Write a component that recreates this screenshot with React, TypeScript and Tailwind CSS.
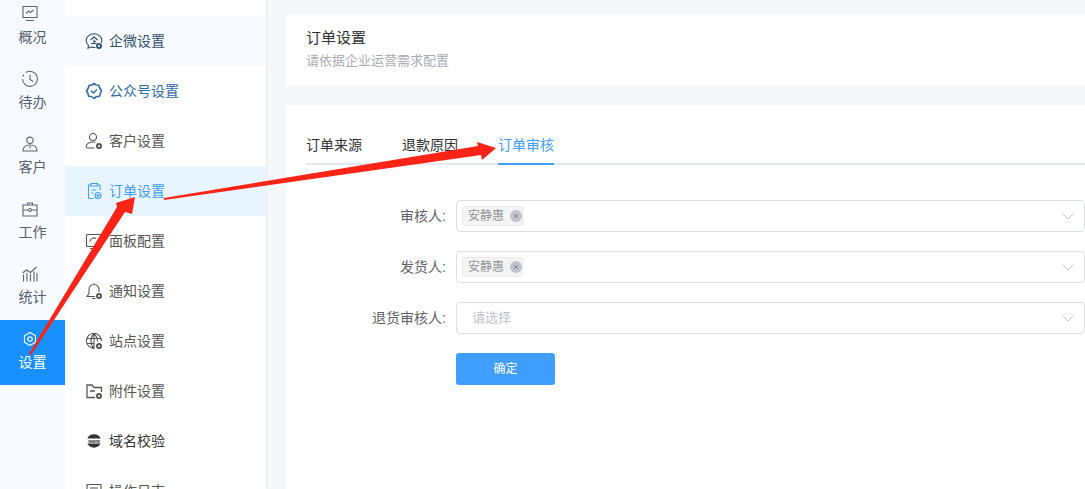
import React from "react";

const FONT = "font-['Liberation_Sans','Noto_Sans_CJK_SC',sans-serif]";

const railItems = [
  { label: "概况", icon: <path d="M2 1.500h14v11H2zM5 15.500h8M5 8.500l2.500-2.500 2 1.500 3-2.500" /> },
  { label: "待办", icon: <path d="M5 2.500A7.500 7.500 0 1 1 1.500 9M1.800 6.500A7.500 7.500 0 0 1 3 4.500M9 5v4.500l3 2" /> },
  { label: "客户", icon: <path d="M9 8.500a3.200 3.200 0 1 0 0-6.400A3.200 3.200 0 0 0 9 8.500zM2 16c0-3.800 2.800-6 7-6s7 2.200 7 6zM9 11v2.500" /> },
  { label: "工作", icon: <path d="M2 5h14v11H2zM6.500 5V3h5v2M2 10h5M11 10h5M7.500 10a1.500 1.500 0 1 0 3 0a1.500 1.500 0 1 0-3 0" /> },
  { label: "统计", icon: <path d="M2.500 16.500v-7M6 16.500V8M9.500 16.500V9M13 16.500V6.500M16 16.500V8M1.500 8l4-3 4 2.500 6-5.500" /> },
];

// small gear badge in the corner of most menu icons
const Badge = ({ color = "#555" }: { color?: string }) => (
  <>
    <circle cx="14" cy="14" r="3" fill={color} stroke="none" />
    <circle cx="14" cy="14" r="1.100" fill="#fff" stroke="none" />
  </>
);

const menuItems = [
  {
    label: "企微设置",
    color: "#35506e",
    bg: "bg-[#f7fbff]",
    icon: (
      <>
        <path d="M10.500 15.300c-.5.100-1 .200-1.500.200-1 0-2-.2-3-.5l-3 1.200.5-2.900C2 12 1.200 10.300 1.200 8.500 1.200 4.500 5 1.800 9 1.800s7.800 2.700 7.800 6.700c0 .8-.1 1.500-.4 2.200" />
        <path d="M5.500 8L9 4.800 12.500 8M9 7.500v4M6 11.500h5.500M9 9.500h2" />
        <Badge color="#35506e" />
      </>
    ),
  },
  {
    label: "公众号设置",
    color: "#2f6ca8",
    icon: (
      <>
        <path d="M9 1.500l2 1.500 2.800.2.700 2.300L16.500 9l-1.200 2.500-.8 2.700-2.800.300L9 16.500l-2.500-2-2.800-.300-.8-2.700L1.500 9l2-3.500.700-2.300L7 3z" strokeWidth="1.600" strokeLinejoin="round" />
        <path d="M6 8.800l2.300 2.200 3.700-3.500" strokeWidth="1.500" />
      </>
    ),
  },
  {
    label: "客户设置",
    color: "#555",
    icon: (
      <>
        <path d="M8 8.500a3.500 3.500 0 1 0 0-7 3.500 3.500 0 0 0 0 7zM9.500 16H2.500C1.500 16 1 15.300 1.200 14.300 1.800 11.500 4 10 8 10c1 0 1.700.100 2.500.300" />
        <Badge />
      </>
    ),
  },
  {
    label: "订单设置",
    color: "#3f9eff",
    bg: "bg-[#e8f4fe]",
    icon: (
      <>
        <path d="M6 3H3.500v12.500c0 .5.500 1 1 1h4M12.500 3H15v5M6 1.500h6.500V4H6zM6.500 8h5M6.500 11h2" />
        <circle cx="13" cy="13.500" r="3" />
        <circle cx="13" cy="13.500" r="1" />
      </>
    ),
  },
  {
    label: "面板配置",
    color: "#555",
    icon: (
      <>
        <path d="M9 14.500H2.500c-.6 0-1-.4-1-1V3.500c0-.6.400-1 1-1h13c.6 0 1 .4 1 1V9M5 16.500h4" />
        <path d="M5 9.500a4 4 0 0 1 6-3" />
        <Badge />
      </>
    ),
  },
  {
    label: "通知设置",
    color: "#555",
    icon: (
      <>
        <path d="M10 14.500H2l2-3V7.500a5 5 0 0 1 10 0v2.500M7 16.500h3.500M9 2.500V1.500" />
        <Badge />
      </>
    ),
  },
  {
    label: "站点设置",
    color: "#555",
    icon: (
      <>
        <path d="M9.500 16.300A7.500 7.500 0 1 1 16.400 9M1.500 6.500h15M1.500 11.500h8M9 1.500V16.500M9 1.500c-4 4-4 11 0 15M9 1.500c2.500 2.500 3.500 5.500 3.500 8" />
        <Badge />
      </>
    ),
  },
  {
    label: "附件设置",
    color: "#555",
    icon: (
      <>
        <path d="M10 15.500H2V3h5l2 2.500h7.500V10M5 9h5" strokeWidth="1.300" />
        <Badge />
      </>
    ),
  },
  {
    label: "域名校验",
    color: "#333",
    icon: (
      <>
        <path d="M2.300 6.500a7.500 7.500 0 0 1 13.400 0zM2.300 11.500a7.500 7.500 0 0 0 13.400 0z" fill="#333" stroke="none" />
        <text x="9" y="10.700" textAnchor="middle" fontSize="5" fontWeight="700" fill="#333" stroke="none" fontFamily="Liberation Sans">www</text>
      </>
    ),
  },
  {
    label: "操作日志",
    color: "#555",
    icon: <path d="M2 2.500h14v13H2zM5 6h8" />,
  },
];

const Chevron = () => (
  <svg width="12" height="7" viewBox="0 0 12 7" fill="none" stroke="#c0c4cc" strokeWidth="1" className="shrink-0">
    <path d="M.5.5L6 6l5.500-5.500" />
  </svg>
);

const Tag = () => (
  <span className="ml-[5px] flex h-[20px] w-[61px] items-center rounded-[3px] border border-[#e9e9eb] bg-[#f4f4f5] pl-[5px] text-[12px] text-[#909399]">
    安静惠
    <span className="ml-[6px] flex h-[12px] w-[12px] items-center justify-center rounded-full bg-[#c0c4cc]">
      <svg width="6" height="6" viewBox="0 0 6 6" stroke="#777" strokeWidth="0.800">
        <path d="M1 1l4 4M5 1L1 5" />
      </svg>
    </span>
  </span>
);

const FormRow = ({ label, children, mb }: { label: string; children: React.ReactNode; mb: string }) => (
  <div className={`flex h-[32px] items-center ${mb}`}>
    <label className="w-[160px] shrink-0 pr-[10px] text-right text-[14px] text-[#606266]">{label}</label>
    <div className="flex h-[32px] flex-1 items-center justify-between rounded-[4px] border border-[#dcdfe6] pr-[10px]">
      <div className="flex items-center">{children}</div>
      <Chevron />
    </div>
  </div>
);

export default function App() {
  return (
    <div className={`relative flex h-[489px] w-[1085px] overflow-hidden bg-[#f6f7f9] ${FONT}`}>
      {/* icon rail */}
      <div className="w-[65px] shrink-0 bg-[#f7faff]">
        <div className="mt-[-5px]">
          {railItems.map((item) => (
            <div key={item.label} className="flex h-[65px] flex-col items-center pt-[10px] text-[#555e6b]">
              <svg width="18" height="18" viewBox="0 0 18 18" fill="none" stroke="#5c6470" strokeWidth="1.100" className="mr-[5px]">
                {item.icon}
              </svg>
              <span className="mt-[4px] text-[14px] leading-[20px]">{item.label}</span>
            </div>
          ))}
          <div className="flex h-[65px] flex-col items-center bg-[#1890ff] pt-[10px] text-white">
            <svg width="18" height="18" viewBox="0 0 18 18" fill="none" stroke="#fff" strokeWidth="1.100" className="mr-[5px]">
              <path d="M9 2.500l5.500 3.200v6.600L9 15.500l-5.500-3.200V5.700z" strokeLinejoin="round" />
              <circle cx="9" cy="9" r="2.200" />
            </svg>
            <span className="mt-[4px] text-[14px] leading-[20px]">设置</span>
          </div>
        </div>
      </div>

      {/* settings menu */}
      <div className="w-[201px] shrink-0 overflow-hidden bg-white shadow-[1px_0_2px_rgba(0,0,0,0.05)]">
        <div className="mt-[-34px] flex h-[50px] items-center justify-center pl-[4px] text-[14px] text-[#555]">
          基础设置
        </div>
        {menuItems.map((item) => (
          <div
            key={item.label}
            className={`flex h-[50px] shrink-0 items-center pl-[20px] text-[14px] ${item.bg ?? ""}`}
            style={{ color: item.color }}
          >
            <svg width="18" height="18" viewBox="0 0 18 18" fill="none" stroke={item.color} strokeWidth="1.100" className="mr-[6px] shrink-0">
              {item.icon}
            </svg>
            {item.label}
          </div>
        ))}
      </div>

      {/* content */}
      <div className="min-w-0 flex-1 pt-[15px] pl-[20px]">
        <div className="h-[70px] bg-white pt-[13px] pl-[20px]">
          <div className="text-[15px] leading-[20px] text-[#303133]">订单设置</div>
          <div className="mt-[3px] text-[13px] leading-[20px] text-[#a8abb2]">请依据企业运营需求配置</div>
        </div>
        <div className="mt-[20px] h-[400px] bg-white pt-[25px] pl-[20px]">
          <div className="flex h-[35px] border-b-2 border-[#e4e7ed] text-[14px] leading-[30px] text-[#303133]">
            <div className="w-[56px]">订单来源</div>
            <div className="ml-[40px] w-[56px]">退款原因</div>
            <div className="ml-[40px] mb-[-2px] w-[56px] border-b-2 border-[#409eff] text-[#409eff]">订单审核</div>
          </div>
          <div className="mt-[35px] ml-[-10px]">
            <FormRow label="审核人:" mb="mb-[19px]">
              <Tag />
            </FormRow>
            <FormRow label="发货人:" mb="mb-[19px]">
              <Tag />
            </FormRow>
            <FormRow label="退货审核人:" mb="mb-[19px]">
              <span className="pl-[15px] text-[13px] text-[#c0c4cc]">请选择</span>
            </FormRow>
          </div>
          <button className="ml-[150px] h-[32px] w-[99px] rounded-[3px] bg-[#409eff] text-[12px] text-white">确定</button>
        </div>
      </div>

      {/* annotation arrows */}
      <svg className="pointer-events-none absolute top-0 left-0" width="1085" height="489" viewBox="0 0 1085 489">
        <path d="M29 354L117 207L116 203L135 197L132 214L125 212L31 355z" fill="#fb2416" />
        <path d="M164 198L478 146L477 142L496 148L482 160L481 155L164 200z" fill="#fb2416" />
      </svg>
    </div>
  );
}
